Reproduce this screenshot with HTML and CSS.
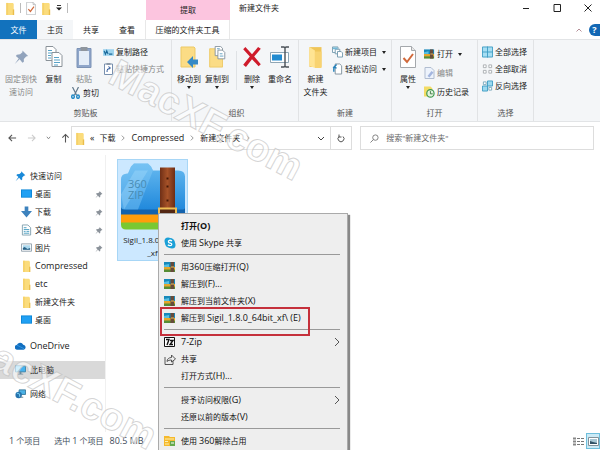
FILE: index.html
```html
<!DOCTYPE html>
<html lang="zh-CN">
<head>
<meta charset="utf-8">
<meta name="viewport" content="width=device-width, initial-scale=1">
<title>新建文件夹</title>
<link rel="stylesheet" href="styles.css">
</head>
<body>
<svg class="sprite" aria-hidden="true">
  <symbol id="folder" viewBox="0 0 10 14"><path d="M1 1h7l1 1v12H1z" fill="#fbdc7c"/><path d="M1 1h2v13H1z" fill="#f6d16a"/><path d="M8 8h1.500v6H8z" fill="#e9bd4c"/></symbol>
  <symbol id="check" viewBox="0 0 16 22"><path d="M.5.5h11l4 4v17H.5z" fill="#fff" stroke="#a4a8ac"/><path d="M11.500.5v4h4" fill="#e8e8e8" stroke="#a4a8ac"/><path d="M3.500 12l3.500 4 6-8" fill="none" stroke="#d0693b" stroke-width="2"/></symbol>
  <symbol id="pin" viewBox="0 0 16 16"><path d="M9 1l6 6-2 .5-2.500 2.500v3L9 14 6 10.500.8 15.500 5 9.500 2 7l1-1.500 3.500-.5L9 3z" fill="currentColor"/></symbol>
  <symbol id="copy" viewBox="0 0 18 22"><g fill="#fff" stroke="#8a9299"><path d="M1 .5h7l3 3v11H1z"/><path d="M7 6.500h7l3 3v11H7z"/></g><path d="M3 4.500h4M3 7h4M3 9.500h3M3 12h3M9 11.500h5M9 14h6M9 16.500h6M9 19h4" stroke="#58a3c7"/></symbol>
  <symbol id="paste" viewBox="0 0 15 22"><path d="M.5 2.500h14v19H.5z" fill="#8fa6ca" stroke="#7c93b6"/><path d="M2.500 5h10v14h-10z" fill="#e4edf8"/><path d="M4 1h7v4H4z" fill="#8f969e"/></symbol>
  <symbol id="path" viewBox="0 0 10 6"><path d="M0 0h10v6H0z" fill="#9ed4ee"/><path d="M1 1.500l1.200 3 1.200-3 1.200 3M5.500 4.500h3" stroke="#176799" fill="none"/></symbol>
  <symbol id="link" viewBox="0 0 10 12"><path d="M1 1h8v10.500H1z" fill="#fff" stroke="#7890af"/><path d="M3 0h4v2H3z" fill="#8b98a8"/><path d="M3.500 9c0-3 1-4 3-4M5 3.500L7 5 5 6.500" fill="none" stroke="#315b9e"/></symbol>
  <symbol id="cut" viewBox="0 0 9 12"><path d="M1.500 0l4 8M7.500 0l-4 8" stroke="#62788a" stroke-width="1.200"/><g fill="none" stroke="#2389c5" stroke-width="1.500"><ellipse cx="2" cy="9.700" rx="1.300" ry="1.600"/><ellipse cx="7" cy="9.700" rx="1.300" ry="1.600"/></g></symbol>
  <symbol id="move" viewBox="0 0 18 22"><path d="M1 1h13l1 1v19H1z" fill="#fbdc85" stroke="#edc965"/><path d="M18 13.500h-5V10l-6 6 6 6v-3.500h5z" fill="#358ac6"/></symbol>
  <symbol id="copyto" viewBox="0 0 18 24"><path d="M1 3h13l1 1v19H1z" fill="#fbdc85" stroke="#edc965"/><g fill="#fff" stroke="#83929c"><path d="M7 .5h6l2 2v8H7z"/><path d="M10 4.500h5l2.500 2.500v7H10z"/></g><path d="M9 3h3M12 8.500h3M12 11h4" stroke="#5c9cc0"/></symbol>
  <symbol id="delete" viewBox="0 0 18 20"><path d="M1 3l2-2 6 6.500L14.500 1 17 2.500 11 9.500l6 7-2 2-6-6.500L3.500 19 1 17l6-7.500z" fill="#cf1b2b"/></symbol>
  <symbol id="rename" viewBox="0 0 20 22"><path d="M.5 6.500h18v10H.5z" fill="#fff" stroke="#8fa6b5"/><path d="M2 8.500h10v6H2z" fill="#218bd0"/><path d="M11 1h3l1 1 1-1h3M15 2v18M11 21h3l1-1 1 1h3" fill="none" stroke="#4b5258" stroke-width="1.400"/></symbol>
  <symbol id="newfolder" viewBox="0 0 12 20"><path d="M0 1h11v18H0z" fill="#f0c659"/><path d="M0 1l5 3v16l-5-2z" fill="#ffe493"/><path d="M5 5h6v15H5z" fill="#f8d371"/></symbol>
  <symbol id="newitem" viewBox="0 0 12 12"><g fill="#fff" stroke="#7298ac"><path d="M.5.5h6v6h-6z"/><path d="M3.500 3h5v5h-5z"/><path d="M6 5.500h4l1.500 1.500v4.500H6z"/></g><path d="M1 1h5v2H1z" fill="#72b9d8"/></symbol>
  <symbol id="easy" viewBox="0 0 12 12"><path d="M3.500.5h5l2 2v9h-7z" fill="#fff" stroke="#7f919d"/><path d="M5 1L2 4l3 1M2 4v5" fill="none" stroke="#2380ba" stroke-width="1.500"/></symbol>
  <symbol id="zip" viewBox="0 0 12 12"><path d="M0 1h11v5H0z" fill="#1789ba"/><path d="M0 4l5-1v3H0z" fill="#57bfe2"/><path d="M0 6h11v3H0z" fill="#e5a62a"/><path d="M0 8.500h11V11H0z" fill="#568d34"/><path d="M6.500 1H10v10H6.500z" fill="#674c3c"/><path d="M7 6h3" stroke="#e7bd60"/></symbol>
  <symbol id="edit" viewBox="0 0 10 12"><path d="M.5.5h6l3 3v8h-9z" fill="#edf3fc" stroke="#b1bdd0"/><path d="M3 9l4-5 2 1.500-4 5z" fill="#a4b6df"/></symbol>
  <symbol id="history" viewBox="0 0 12 12"><path d="M0 0h7l2 2v9H0z" fill="#f3dc65"/><circle cx="7" cy="7.500" r="4" fill="#e2f4df" stroke="#429952" stroke-width="1.300"/><path d="M7 5v3h2.500" fill="none" stroke="#3d7444"/></symbol>
  <symbol id="all" viewBox="0 0 12 12"><path d="M.5.5h11v11H.5zM6 0v12M0 6h12" fill="#a6def3" stroke="#3e9dc4"/></symbol>
  <symbol id="none" viewBox="0 0 12 12"><path d="M1.500 1.500h3v3h-3zM7.500 1.500h3v3h-3zM1.500 7.500h3v3h-3zM7.500 7.500h3v3h-3z" fill="#fff" stroke="#a9adb0"/></symbol>
  <symbol id="invert" viewBox="0 0 12 12"><path d="M6 .5h5.500V6H6zM.5 6H6v5.500H.5z" fill="#9bd9ef" stroke="#3e9dc4"/><path d="M1.500 1.500h3v3h-3zM7.500 7.500h3v3h-3z" fill="#fff" stroke="#78a9bc"/></symbol>
  <symbol id="desktop" viewBox="0 0 12 10"><path d="M0 0h12v9H0z" fill="#0c87d8"/><path d="M1 1h10v7H1z" fill="#20a0f3"/></symbol>
  <symbol id="down" viewBox="0 0 12 12"><path d="M4 0h4v5h4l-6 7-6-7h4z" fill="#3d82bd"/></symbol>
  <symbol id="doc" viewBox="0 0 12 12"><path d="M1.500.5h6l3 3v8h-9z" fill="#fff" stroke="#80a0ae"/><path d="M3 3.500h3M3 5.500h6M3 7.500h2M6 7.500h3M3 9.500h6" stroke="#459bbf"/></symbol>
  <symbol id="picture" viewBox="0 0 12 10"><path d="M.5.5h11v8H.5z" fill="#fff" stroke="#8e9eaa"/><path d="M2 2h8v5H2z" fill="#add9ee"/><path d="M2 5l2-1 3 2 3-1v2H2z" fill="#285f83"/></symbol>
  <symbol id="cloud" viewBox="0 0 12 10"><path d="M2.500 9A2.500 2.500 0 0 1 2 4a3.800 3.800 0 0 1 7-.5A2.800 2.800 0 0 1 9.500 9z" fill="#126fc0"/><path d="M2 4l8 4" stroke="#3397e4"/></symbol>
  <symbol id="pc" viewBox="0 0 12 10"><path d="M.5.5h11v6.500H.5z" fill="#45b3ee" stroke="#3b83aa"/><path d="M1 1h8L2 6.500H1z" fill="#8cd8fb"/><path d="M5 7h2v2h2v1H3V9h2z" fill="#708c9c"/></symbol>
  <symbol id="network" viewBox="0 0 12 12"><path d="M4.500 1.500h7v5h-7z" fill="#4bb1e5" stroke="#3a7b9d"/><circle cx="4" cy="7" r="3.500" fill="#2674ae"/><path d="M2 5l3 1v3" stroke="#7ed5f7" fill="none"/><path d="M6 9h3v1H6z" fill="#617d8c"/></symbol>
  <symbol id="skype" viewBox="0 0 12 12"><circle cx="4" cy="4" r="3.500" fill="#1ba0d7"/><circle cx="6" cy="6" r="5" fill="#1ba0d7"/><circle cx="8" cy="8" r="3.500" fill="#1ba0d7"/><path d="M8 4C6 2.500 4 3.500 4.500 5S8 6 7.800 7.500 5 9 3.900 7.800" fill="none" stroke="#fff" stroke-width="1.300"/></symbol>
  <symbol id="seven" viewBox="0 0 12 12"><path d="M.5 1.500h10v9H.5z" fill="#fff" stroke="#111"/><path d="M2 3.500h3L3 9M6 4.500h3l-3 4h3" fill="none" stroke="#111" stroke-width="1.400"/></symbol>
  <symbol id="share" viewBox="0 0 12 12"><path d="M1 4v7.500h8V8M3 8.500C3 6 5 4.500 7.500 4.500V2l4 4-4 3V7C5.500 7 4 7.500 3 8.500z" fill="none" stroke="#444" stroke-width=".9"/></symbol>
  <symbol id="unlock" viewBox="0 0 12 12"><path d="M0 1h5l1 1h5v9H0z" fill="#f5b92d"/><path d="M1 4h9M1 9h4M1 6.500h3" stroke="#fff0b0"/><path d="M6 6h5v5H6z" fill="#66a94c"/><path d="M7 8h3" stroke="#fff"/></symbol>
  <symbol id="chev" viewBox="0 0 6 10"><path d="M1 1l4 4-4 4" fill="none" stroke="currentColor"/></symbol>
</svg>

<div class="window">
  <header class="titlebar">
    <div class="quick">
      <button aria-label="文件夹"><svg class="fold"><use href="#folder"/></svg></button><i class="bar"></i>
      <button aria-label="属性"><svg class="fold"><use href="#check"/></svg></button>
      <button aria-label="新建"><svg class="fold"><use href="#folder"/></svg></button>
      <button aria-label="自定义"><svg class="custom" viewBox="0 0 6 6"><path d="M1 .5h4" stroke="#333"/><path d="M0 2.500h6l-3 3z" fill="#222"/></svg></button><i class="bar"></i>
    </div>
    <span class="context">提取</span>
    <h1>新建文件夹</h1>
    <div class="controls">
      <button aria-label="最小化"><svg viewBox="0 0 8 8"><path d="M1 4.500h6" stroke="#222"/></svg></button>
      <button aria-label="最大化"><svg viewBox="0 0 8 8"><path d="M1 .5h6.500v7H1z" fill="none" stroke="#222"/></svg></button>
      <button aria-label="关闭"><svg viewBox="0 0 8 8"><path d="M.5.5l7 7M7.500.5l-7 7" stroke="#222"/></svg></button>
    </div>
  </header>
  <nav class="tabs">
    <button class="file">文件</button><button class="active">主页</button><button>共享</button><button>查看</button><button class="tool">压缩的文件夹工具</button>
    <div class="help"><button aria-label="折叠功能区"><svg viewBox="0 0 6 4"><path d="M.5 3.500L3 1l2.500 2.500" fill="none" stroke="#b58e97"/></svg></button><button class="ask">?</button></div>
  </nav>

  <section class="ribbon">
    <div class="group clip">
      <div class="tools">
        <button class="big wide muted"><svg class="pinbig"><use href="#pin"/></svg><span>固定到快<br>速访问</span></button>
        <button class="big"><svg><use href="#copy"/></svg><span>复制</span></button>
        <div class="stack pastes"><button class="big muted"><svg><use href="#paste"/></svg><span>粘贴</span></button><button class="small"><svg><use href="#cut"/></svg>剪切</button></div>
        <div class="stack"><button class="small"><svg class="label"><use href="#path"/></svg>复制路径</button><button class="small muted"><svg><use href="#link"/></svg>粘贴快捷方式</button></div>
      </div>
      <h2>剪贴板</h2>
    </div>
    <div class="group organize">
      <div class="tools">
        <button class="big drop"><svg><use href="#move"/></svg><span>移动到</span></button>
        <button class="big drop"><svg><use href="#copyto"/></svg><span>复制到</span></button>
        <i class="divider"></i>
        <button class="big drop"><svg><use href="#delete"/></svg><span>删除</span></button>
        <button class="big"><svg><use href="#rename"/></svg><span>重命名</span></button>
      </div>
      <h2>组织</h2>
    </div>
    <div class="group create">
      <div class="tools">
        <button class="big"><svg><use href="#newfolder"/></svg><span>新建<br>文件夹</span></button>
        <div class="stack"><button class="small more"><svg><use href="#newitem"/></svg>新建项目</button><button class="small more"><svg><use href="#easy"/></svg>轻松访问</button></div>
      </div>
      <h2>新建</h2>
    </div>
    <div class="group open">
      <div class="tools">
        <button class="big drop"><svg><use href="#check"/></svg><span>属性</span></button>
        <div class="stack loose"><button class="small more"><svg><use href="#zip"/></svg>打开</button><button class="small muted"><svg><use href="#edit"/></svg>编辑</button><button class="small"><svg><use href="#history"/></svg>历史记录</button></div>
      </div>
      <h2>打开</h2>
    </div>
    <div class="group select">
      <div class="tools"><div class="stack"><button class="small"><svg><use href="#all"/></svg>全部选择</button><button class="small"><svg><use href="#none"/></svg>全部取消</button><button class="small"><svg><use href="#invert"/></svg>反向选择</button></div></div>
      <h2>选择</h2>
    </div>
  </section>

  <section class="location">
    <div class="history">
      <button aria-label="后退"><svg viewBox="0 0 10 10"><path d="M9 5H1M4.500 1.500L1 5l3.500 3.500" fill="none" stroke="#555" stroke-width="1.200"/></svg></button>
      <button aria-label="前进"><svg viewBox="0 0 10 10"><path d="M1 5h8M5.500 1.500L9 5 5.500 8.500" fill="none" stroke="#ccc" stroke-width="1.200"/></svg></button>
      <button aria-label="最近"><svg class="tiny" viewBox="0 0 6 4"><path d="M1 .5L3 3 5 .5" fill="none" stroke="#777"/></svg></button>
      <button aria-label="向上"><svg viewBox="0 0 10 10"><path d="M5 10V1M1.500 4.500L5 1l3.500 3.500" fill="none" stroke="#555" stroke-width="1.200"/></svg></button>
    </div>
    <div class="address">
      <svg class="fold"><use href="#folder"/></svg><span class="latin">«</span>
      <a href="#">下载</a><svg class="crumb"><use href="#chev"/></svg><a href="#" class="latin">Compressed</a><svg class="crumb"><use href="#chev"/></svg><a href="#">新建文件夹</a><svg class="crumb"><use href="#chev"/></svg>
      <button class="history-list" aria-label="历史"><svg viewBox="0 0 8 8"><path d="M1 2.500l3 3 3-3" fill="none" stroke="#444"/></svg></button>
      <button class="refresh" aria-label="刷新"><svg viewBox="0 0 8 9"><path d="M2 2.500a3 3 0 1 0 4 0M2 .5v2.500h2.500" fill="none" stroke="#555"/></svg></button>
    </div>
    <label class="search"><svg viewBox="0 0 10 10"><circle cx="6" cy="4" r="3" fill="none" stroke="#777"/><path d="M4 6L.5 9.500" stroke="#777"/></svg><input type="search" aria-label="搜索" placeholder="搜索&quot;新建文件夹&quot;"></label>
  </section>

  <main>
    <nav class="side">
      <a href="#" class="root"><svg class="star"><use href="#pin"/></svg>快速访问</a>
      <a href="#"><svg><use href="#desktop"/></svg>桌面<svg class="pinned"><use href="#pin"/></svg></a>
      <a href="#"><svg><use href="#down"/></svg>下载<svg class="pinned"><use href="#pin"/></svg></a>
      <a href="#"><svg><use href="#doc"/></svg>文档<svg class="pinned"><use href="#pin"/></svg></a>
      <a href="#"><svg><use href="#picture"/></svg>图片<svg class="pinned"><use href="#pin"/></svg></a>
      <a href="#" class="latin"><svg><use href="#folder"/></svg>Compressed</a>
      <a href="#" class="latin"><svg><use href="#folder"/></svg>etc</a>
      <a href="#"><svg><use href="#folder"/></svg>新建文件夹</a>
      <a href="#"><svg><use href="#desktop"/></svg>桌面</a>
      <a href="#" class="root cloud latin"><svg><use href="#cloud"/></svg>OneDrive</a>
      <a href="#" class="root spaced current"><svg><use href="#pc"/></svg>此电脑</a>
      <a href="#" class="root spaced"><svg><use href="#network"/></svg>网络</a>
    </nav>
    <div class="files">
      <figure class="tile">
        <svg viewBox="0 0 66 68">
          <defs><linearGradient id="blue" x2="0" y2="1"><stop stop-color="#67baf0"/><stop offset="1" stop-color="#2189dc"/></linearGradient><linearGradient id="belt"><stop stop-color="#6f2f16"/><stop offset=".5" stop-color="#a65228"/><stop offset="1" stop-color="#6c2d16"/></linearGradient></defs>
          <path d="M1 50h64v12q0 5-5 5H6q-5 0-5-5z" fill="#79c832"/><path d="M1 46h64v14H1z" fill="#ff9d0b"/><path d="M1 42h64v10H1z" fill="#1262ad"/>
          <path d="M1 17q0-6 7-6l3-7 3-3h14l3 3 2 4h25q7 0 7 6v31q0 2-3 2H4q-3 0-3-3z" fill="url(#blue)"/>
          <path d="M8 11l3-7 3-3h14l3 3 2 4-7 18-8 21H6q-5 0-5-3V17q0-6 7-6z" fill="#8bd0fa" opacity=".4"/><path d="M1 32L15 8h13L4 47z" fill="#b6e5ff" opacity=".3"/>
          <text x="8" y="25" class="zipmark">360</text><text x="8" y="36" class="zipmark">ZIP</text>
          <path d="M40 5h15v62H40z" fill="url(#belt)"/><path d="M47.500 15v2M47.500 23v2M47.500 37v2" stroke="#451807" stroke-width="2"/><path d="M38 45h19v12H38z" fill="#efbe54"/><path d="M40 47h15v7H40z" fill="#532713"/>
        </svg>
        <figcaption>Sigil_1.8.0_64bit<br>_xf</figcaption>
      </figure>
    </div>
  </main>

  <footer>
    <span><b>1</b> 个项目</span><span>选中 <b>1</b> 个项目</span><b>80.5 MB</b>
    <div class="views"><button aria-label="详细信息"><svg viewBox="0 0 11 9"><path d="M0 1.500h3M0 4.500h3M0 7.500h3" stroke="#888" stroke-width="2"/><path d="M4 1.500h7M4 4.500h7M4 7.500h7" stroke="#777" stroke-dasharray="3 1"/></svg></button><button class="chosen" aria-label="大图标"><svg viewBox="0 0 11 9"><path d="M.5.5h10v8H.5z" fill="#fff" stroke="#83929a"/><path d="M2 2h7v5H2z" fill="#a8c7d4"/><path d="M2 4l3 1 4 1v1H2z" fill="#315165"/></svg></button></div>
  </footer>

  <div class="watermark first" aria-hidden="true">MacXF.com</div>
  <div class="watermark second" aria-hidden="true">MacXF.com</div>

  <div class="menu" role="menu">
    <button role="menuitem" class="default">打开<b>(O)</b></button>
    <button role="menuitem"><svg><use href="#skype"/></svg>使用 <b>Skype</b> 共享</button>
    <hr>
    <button role="menuitem"><svg><use href="#zip"/></svg>用<b>360</b>压缩打开<b>(Q)</b></button>
    <button role="menuitem"><svg><use href="#zip"/></svg>解压到<b>(F)...</b></button>
    <button role="menuitem"><svg><use href="#zip"/></svg>解压到当前文件夹<b>(X)</b></button>
    <button role="menuitem" class="marked"><svg><use href="#zip"/></svg>解压到 <b>Sigil_1.8.0_64bit_xf\ (E)</b></button>
    <hr>
    <button role="menuitem" class="sub"><svg><use href="#seven"/></svg><b>7-Zip</b><svg class="arrow"><use href="#chev"/></svg></button>
    <button role="menuitem"><svg><use href="#share"/></svg>共享</button>
    <button role="menuitem">打开方式<b>(H)...</b></button>
    <hr>
    <button role="menuitem" class="sub">授予访问权限<b>(G)</b><svg class="arrow"><use href="#chev"/></svg></button>
    <button role="menuitem">还原以前的版本<b>(V)</b></button>
    <hr>
    <button role="menuitem"><svg><use href="#unlock"/></svg>使用 <b>360</b>解除占用</button>
  </div>
</div>
</body>
</html>
```
FILE: styles.css
```css
* { box-sizing: border-box; }
body { margin: 0; color: #222; background: #fff; font: 8px/12px "Open Sans", "Noto Sans CJK SC", sans-serif; }
button, input { margin: 0; padding: 0; border: 0; background: none; color: inherit; font: inherit; white-space: nowrap; }
a { color: inherit; text-decoration: none; }
svg { display: block; flex: none; }
h1, h2 { margin: 0; font: inherit; }
b { font-size: 9px; font-weight: 400; }
.latin { font-size: 9px; }
.sprite { position: absolute; width: 0; height: 0; }
.window { position: relative; display: flex; flex-direction: column; height: 100vh; overflow: hidden; }

.titlebar { display: flex; height: 20px; }
.quick { display: flex; align-items: center; gap: 5px; width: 146px; padding: 0 0 4px 5px; }
.quick button { display: flex; }
.fold { width: 10px; height: 13px; }
.custom { width: 6px; height: 6px; }
.bar { width: 1px; height: 10px; background: #bbb; }
.context { width: 84px; line-height: 19px; text-align: center; background: #fcc5df; }
.titlebar h1 { padding-left: 9px; line-height: 16px; }
.controls { display: flex; gap: 23px; margin-left: auto; padding: 4px 8px 0 0; }
.controls button { display: flex; }
.controls svg { width: 8px; height: 8px; }

.tabs { display: flex; height: 19px; }
.tabs > button { width: 36px; }
.tabs .file { width: 37px; background: #1272bd; color: #fff; }
.tabs .active { background: #f4f6f8; }
.tabs .tool { width: 85px; border: solid #e8e8e8; border-width: 0 1px; }
.help { display: flex; align-items: center; gap: 7px; margin-left: auto; }
.help svg { width: 6px; height: 4px; }
.help .ask { width: 11px; height: 12px; border-radius: 6px 0 0 6px; background: #1267b4; color: #fff; font-size: 9px; font-weight: 700; }

.ribbon { display: flex; height: 83px; background: #f4f6f8; border: solid #e2e4e6; border-width: 1px 0; }
.group { display: flex; flex-direction: column; justify-content: space-between; padding: 6px 0 2px; border-right: 1px solid #e1e3e5; }
.tools { display: flex; align-items: flex-start; }
.group h2 { color: #555; text-align: center; }
.clip { width: 172px; }
.organize { width: 127px; padding-left: 3px; }
.create { width: 93px; }
.open { width: 86px; }
.select { width: 56px; }
.big { display: flex; flex-direction: column; align-items: center; gap: 4px; width: 28px; }
.big svg { width: 20px; height: 22px; }
.big span { line-height: 13px; }
.big .pinbig { width: 15px; color: #91a3bc; }
.wide { width: 42px; }
.clip .big + .big { width: 23px; }
.muted { color: #878787; }
.drop::after { content: ""; margin-top: -3px; border: solid transparent; border-width: 3px 2px 0; border-top-color: #222; }
.stack { display: flex; flex-direction: column; gap: 5px; }
.small { display: flex; align-items: center; gap: 2px; height: 12px; }
.small svg { width: 11px; height: 12px; }
.small .label { height: 7px; }
.pastes { width: 36px; gap: 2px; padding-left: 5px; }
.more::after { content: ""; margin-left: 3px; border: solid transparent; border-width: 3px 2px 0; border-top-color: #222; }
.clip > .tools > .stack:last-child { margin-left: 2px; }
.organize .divider { width: 1px; height: 39px; background: #dfe2e5; margin: 5px 1px 0 5px; }
.create .big { width: 33px; }
.open .big { width: 32px; }
.open .stack { padding-top: 2px; gap: 7px; }
.select .tools { padding-left: 4px; }

.location { display: flex; gap: 8px; height: 33px; padding: 4px 6px 5px 8px; }
.history { display: flex; align-items: center; gap: 10px; width: 55px; }
.history button { display: flex; }
.history svg { width: 9px; height: 10px; }
.history .tiny { width: 5px; height: 4px; }
.address { display: flex; flex: 285; min-width: 0; align-items: center; gap: 5px; padding-left: 3px; border: 1px solid #ddd; }
.crumb { width: 6px; height: 6px; color: #555; }
.address .history-list { margin-left: auto; }
.address button svg { width: 8px; height: 9px; }
.refresh { display: grid; place-items: center; align-self: stretch; width: 21px; border-left: 1px solid #ddd; }
.search { display: flex; flex: 230; min-width: 0; align-items: center; gap: 7px; padding-left: 9px; border: 1px solid #ddd; }
.search svg { width: 9px; height: 9px; }
.search input { flex: 1; min-width: 0; outline: 0; }
.search input::placeholder { color: #666; opacity: 1; }

main { display: flex; flex: 1; min-height: 0; }
.side { width: 106px; padding-top: 12px; border-right: 1px solid #f0f0f0; }
.side a { display: flex; align-items: center; gap: 3px; height: 18px; padding: 0 2px 0 21px; }
.side svg { width: 11px; height: 12px; }
.side .root { gap: 4px; padding-left: 15px; }
.side .star { color: #1989d8; }
.side .pinned { width: 8px; height: 9px; margin-left: auto; color: #8b929a; }
.side .cloud { margin-top: 8px; }
.side .spaced { margin-top: 6px; }
.side .current { background: #d9d9d9; }
.files { flex: 1; padding: 4px 11px; }
.tile { width: 71px; height: 102px; margin: 0; padding: 1px; border: 1px solid #a7d6f6; background: #cce8ff; text-align: center; }
.tile svg { width: 66px; height: 71px; margin: 0 auto 1px; }
.tile figcaption { font-size: 8px; line-height: 13px; }
.zipmark { font: 11px "Open Sans", sans-serif; fill: #488cb4; }

footer { display: flex; align-items: center; gap: 14px; height: 18px; padding-left: 9px; color: #3d4b59; }
footer > b { margin-left: -8px; }
.views { display: flex; align-items: center; gap: 2px; margin-left: auto; }
.views button { display: grid; place-items: center; height: 16px; width: 11px; }
.views svg { width: 11px; height: 9px; }
.views .chosen { width: 14px; border: 1px solid #6fbfdc; background: #cbeaf6; }

.watermark { position: absolute; color: rgba(255, 255, 255, .6); font: 700 39px/40px "Liberation Sans", sans-serif; -webkit-text-stroke: 1px rgba(185, 185, 185, .6); transform: rotate(28deg); transform-origin: 0 100%; }
.first { left: 103px; top: 48px; }
.second { left: -43px; top: 317px; }

.menu { position: absolute; left: 158px; top: 213px; width: 190px; padding: 3px 0 8px; border: 1px solid #aaa; background: #eee; color: #111; box-shadow: 2px 2px 1px #888; }
.menu button { position: relative; display: block; width: 100%; height: 17px; padding-left: 22px; line-height: 17px; text-align: left; white-space: pre; }
.menu button > svg:first-child { position: absolute; left: 5px; top: 3px; width: 12px; height: 12px; }
.menu button > .arrow:last-child { position: absolute; left: auto; right: 7px; top: 4px; width: 6px; height: 10px; color: #555; }
.menu hr { height: 1px; margin: 3px 7px 3px 5px; border: 0; background: #999; }
.menu .default, .default b { font-weight: 700; }
.marked::after { content: ""; position: absolute; left: 1px; top: -2px; width: 146px; height: 25px; border: 2px solid #c5303b; z-index: 1; }
```
